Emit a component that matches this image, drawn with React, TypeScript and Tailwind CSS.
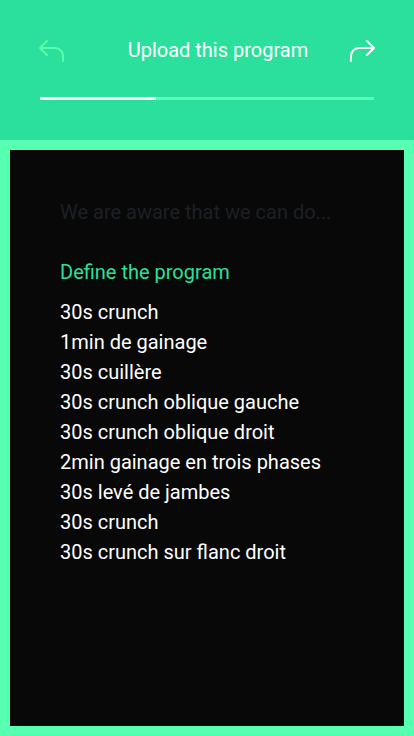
import React from "react";

const items = [
  "30s crunch",
  "1min de gainage",
  "30s cuillère",
  "30s crunch oblique gauche",
  "30s crunch oblique droit",
  "2min gainage en trois phases",
  "30s levé de jambes",
  "30s crunch",
  "30s crunch sur flanc droit",
];

export default function App() {
  return (
    <div className="w-[414px] h-[736px] flex flex-col bg-[#57ffb0] overflow-hidden" style={{ fontFamily: "Roboto, 'Noto Sans', sans-serif" }}>
      <div className="h-[140px] bg-[#2be09c] pt-[37px] flex flex-col shrink-0">
        <div className="flex items-center justify-between h-[26px] px-[38px]">
          <svg width="28" height="24" viewBox="0 0 28 24" fill="none" stroke="#57ffb0" strokeWidth="2" strokeLinecap="round" strokeLinejoin="round">
            <path d="M9 3 L2 10 L9 17 M2 10 H17 A8 8 0 0 1 25 18 V23" />
          </svg>
          <div className="text-white text-[20px] leading-none pl-[22px]">Upload this program</div>
          <svg width="28" height="24" viewBox="0 0 28 24" fill="none" stroke="#ffffff" strokeWidth="2" strokeLinecap="round" strokeLinejoin="round">
            <path d="M19 3 L26 10 L19 17 M26 10 H11 A8 8 0 0 0 3 18 V23" />
          </svg>
        </div>
        <div className="mt-[34px] mx-10 h-[3px] bg-[#57ffb0] flex">
          <div className="w-[116px] h-full bg-white" />
        </div>
      </div>
      <div className="flex-1 p-[10px] flex">
        <div className="flex-1 bg-[#080808] px-[50px] pt-[50px]">
          <div className="text-[20px] leading-[24px] text-[#1c2026]">We are aware that we can do...</div>
          <div className="mt-[36px] text-[20px] leading-[24px] text-[#2be09c]">Define the program</div>
          <div className="mt-[13px] flex flex-col">
            {items.map((t, i) => (
              <div key={i} className="text-white text-[20px] leading-[30px]">{t}</div>
            ))}
          </div>
        </div>
      </div>
    </div>
  );
}
